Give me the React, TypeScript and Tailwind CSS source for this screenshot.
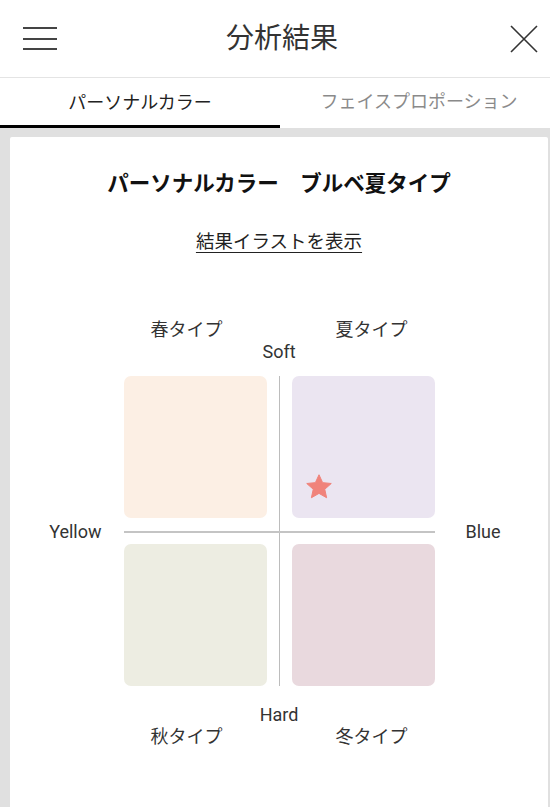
import React from "react";

const font = { fontFamily: "Roboto, 'Noto Sans CJK JP', sans-serif" };

function Star() {
  return (
    <svg width="30" height="30" viewBox="0 0 24 24" className="absolute left-[12px] top-[96px]">
      <path
        d="M12 2.2l2.9 6.3 6.9.7-5.2 4.6 1.5 6.8L12 17.1l-6.1 3.5 1.5-6.8-5.2-4.6 6.9-.7z"
        fill="#f0837b"
        stroke="#f0837b"
        strokeWidth="0.8"
        strokeLinejoin="round"
      />
    </svg>
  );
}

export default function App() {
  return (
    <div className="w-[550px] h-[807px] overflow-hidden bg-white flex flex-col" style={font}>
      <header className="relative h-[78px] shrink-0 flex items-center justify-between pl-[23px] pr-[12px] border-b border-[#e4e4e4]">
        <div className="flex flex-col gap-[8.5px] w-[34px]">
          <span className="h-[2px] bg-[#444]" />
          <span className="h-[2px] bg-[#444]" />
          <span className="h-[2px] bg-[#444]" />
        </div>
        <h1 className="text-[28px] text-[#333] -ml-[3px]">分析結果</h1>
        <svg width="28" height="28" viewBox="0 0 28 28">
          <path d="M1 1L27 27M27 1L1 27" stroke="#333" strokeWidth="1.6" />
        </svg>
      </header>

      <nav className="h-[50px] shrink-0 flex">
        <div className="w-[280px] flex items-center justify-center border-b-[3px] border-black text-[18px] text-[#222] pt-[1px]">
          パーソナルカラー
        </div>
        <div className="w-[270px] flex items-center justify-center text-[18px] text-[#8a8a8a] pb-[3px] pl-[8px]">
          フェイスプロポーション
        </div>
      </nav>

      <main className="flex-1 bg-[#e0e0e0] pt-[9px] pl-[10px] pr-[2px]">
        <section className="h-full bg-white rounded-t-[2px] flex flex-col items-center pt-[33px]">
          <h2 className="text-[21.5px] font-bold text-[#111] leading-[28px]">パーソナルカラー　ブルベ夏タイプ</h2>
          <a className="mt-[31px] text-[18.5px] text-[#222] underline underline-offset-[4px] decoration-[1px] leading-[26px]">
            結果イラストを表示
          </a>

          <div className="mt-[63px] flex text-[18px] text-[#333] leading-[24px]">
            <span className="w-[185px] text-center">春タイプ</span>
            <span className="w-[185px] text-center">夏タイプ</span>
          </div>
          <span className="text-[18px] text-[#333] leading-[22px] -mt-[1px]">Soft</span>

          <div className="relative mt-[13px] w-[311px] grid grid-cols-[143px_143px] gap-x-[25px] gap-y-[26px]">
            <div className="h-[142px] rounded-[7px] bg-[#fcefe4]" />
            <div className="relative h-[142px] rounded-[7px] bg-[#ebe5f1]">
              <Star />
            </div>
            <div className="h-[142px] rounded-[7px] bg-[#edede2]" />
            <div className="h-[142px] rounded-[7px] bg-[#e9d9de]" />

            <span className="absolute left-[155px] top-0 h-full w-px bg-[#bcbcbc]" />
            <span className="absolute left-0 top-[155px] w-full h-[1.5px] bg-[#c4c4c4]" />
            <span className="absolute right-full mr-[22px] top-[144px] text-[18px] text-[#333] leading-[24px]">Yellow</span>
            <span className="absolute left-full ml-[31px] top-[144px] text-[18px] text-[#333] leading-[24px]">Blue</span>
          </div>

          <span className="mt-[18px] text-[18px] text-[#333] leading-[22px]">Hard</span>
          <div className="-mt-[1px] flex text-[18px] text-[#333] leading-[24px]">
            <span className="w-[185px] text-center">秋タイプ</span>
            <span className="w-[185px] text-center">冬タイプ</span>
          </div>
        </section>
      </main>
    </div>
  );
}
